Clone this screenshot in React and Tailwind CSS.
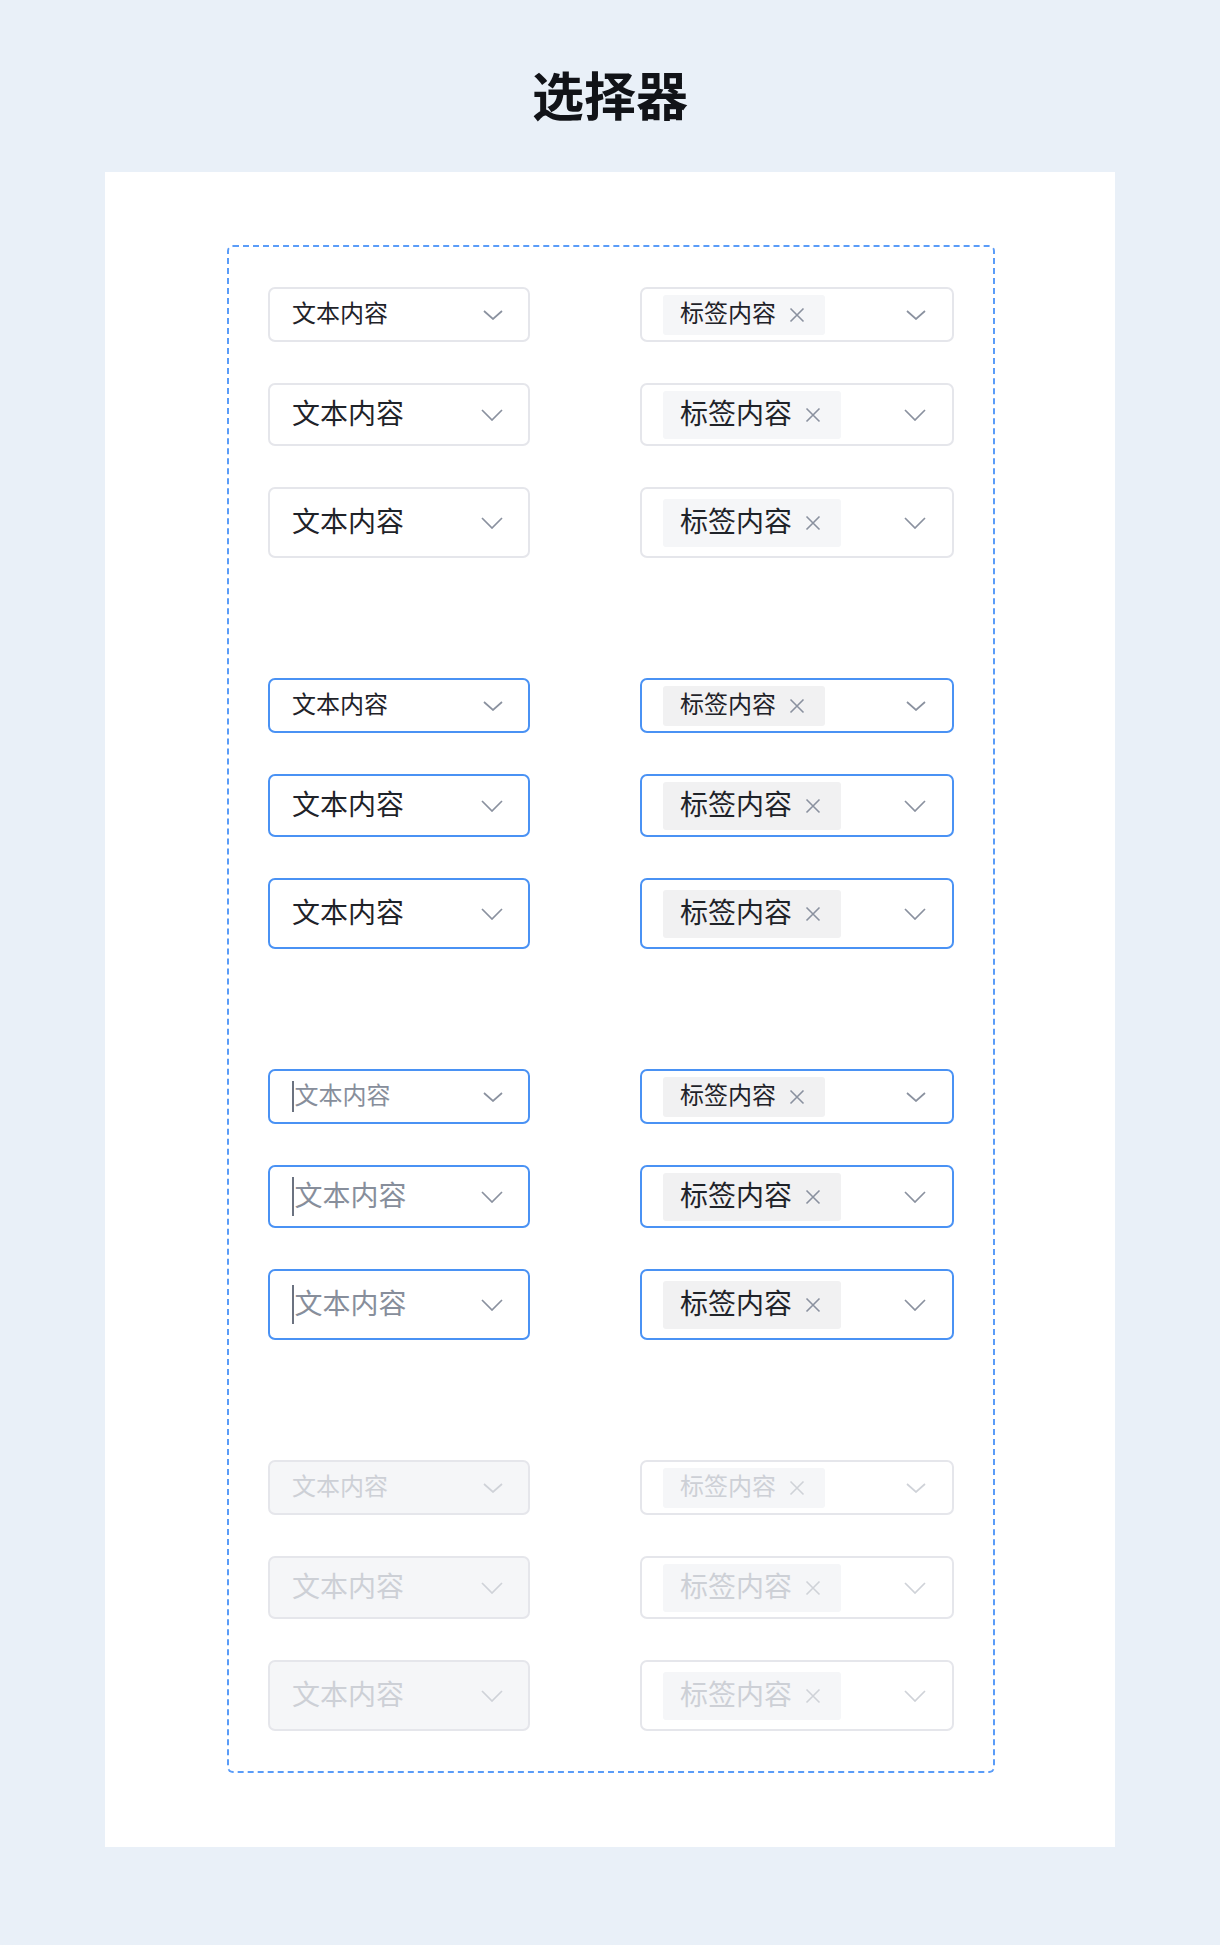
import React from 'react';

const font = { fontFamily: '"Noto Sans CJK SC", "Noto Sans", sans-serif' };

const sizes = {
  sm: { h: 'h-[55px]', text: 'text-[24px]', tag: 'h-[40px]', caret: 'h-[31px]', chevW: 20, chevH: 10 },
  md: { h: 'h-[63px]', text: 'text-[28px]', tag: 'h-[48px]', caret: 'h-[39px]', chevW: 22, chevH: 12 },
  lg: { h: 'h-[71px]', text: 'text-[28px]', tag: 'h-[48px]', caret: 'h-[39px]', chevW: 22, chevH: 12 },
};

const Chevron = ({ w, h, color }) => (
  <svg width={w} height={h} viewBox={`0 0 ${w} ${h}`} fill="none">
    <path d={`M1 1 L${w / 2} ${h - 1} L${w - 1} 1`} stroke={color} strokeWidth="1.7" />
  </svg>
);

const Cross = ({ color }) => (
  <svg width="16" height="16" viewBox="0 0 16 16" fill="none">
    <path d="M1.5 1.5 L14.5 14.5 M14.5 1.5 L1.5 14.5" stroke={color} strokeWidth="1.6" />
  </svg>
);

const boxClass = (state) => {
  if (state === 'active' || state === 'focus') return 'border-[#4a92f4] bg-white';
  if (state === 'disabled') return 'border-[#e5e6eb] bg-[#f5f6f8]';
  return 'border-[#e5e6eb] bg-white';
};

const TextSelect = ({ size, state }) => {
  const s = sizes[size];
  const disabled = state === 'disabled';
  const textColor = disabled ? 'text-[#cdd0d6]' : state === 'focus' ? 'text-[#878e9b]' : 'text-[#1f2329]';
  return (
    <div className={`w-[262px] ${s.h} border-2 rounded-[7px] flex items-center justify-between pl-[22px] pr-[25px] ${boxClass(state)}`}>
      <div className="flex items-center">
        {state === 'focus' && <span className={`w-[1.5px] ${s.caret} bg-[#6b7280] mr-[1px]`}></span>}
        <span className={`${s.text} leading-none pb-[5px] ${textColor}`}>文本内容</span>
      </div>
      <Chevron w={s.chevW} h={s.chevH} color={disabled ? '#cfd2d8' : '#8a919f'} />
    </div>
  );
};

const TagSelect = ({ size, state }) => {
  const s = sizes[size];
  const disabled = state === 'disabled';
  const tagBg = state === 'active' || state === 'focus' ? 'bg-[#f1f1f2]' : 'bg-[#f5f6f8]';
  return (
    <div className={`w-[314px] ${s.h} border-2 rounded-[7px] flex items-center justify-between pl-[21px] pr-[26px] ${state === 'disabled' ? 'border-[#e5e6eb] bg-white' : boxClass(state)}`}>
      <div className={`${s.tag} ${tagBg} rounded-[3px] flex items-center pl-[17px] pr-[20px] gap-[13px]`}>
        <span className={`${s.text} leading-none pb-[5px] ${disabled ? 'text-[#cdd0d6]' : 'text-[#1f2329]'}`}>标签内容</span>
        <Cross color={disabled ? '#cfd2d8' : '#8a919f'} />
      </div>
      <Chevron w={s.chevW} h={s.chevH} color={disabled ? '#cfd2d8' : '#8a919f'} />
    </div>
  );
};

const Group = ({ state }) => (
  <div className="flex flex-col gap-[41px]">
    {['sm', 'md', 'lg'].map((size) => (
      <div key={size} className="flex items-center justify-between">
        <TextSelect size={size} state={state} />
        <TagSelect size={size} state={state} />
      </div>
    ))}
  </div>
);

export default function App() {
  return (
    <div className="min-h-[1945px] bg-[#e9f0f8] flex flex-col items-center" style={font}>
      <h1 className="pt-[63px] mb-[47px] text-[52px] leading-[62px] font-bold text-[#111318]">选择器</h1>
      <div className="w-[1010px] bg-white pt-[73px] pb-[74px] pl-[122px] pr-[120px]">
        <div className="border-2 border-dashed border-[#5a9cf8] rounded-[6px] px-[39px] py-[40px] flex flex-col gap-[120px]">
          <Group state="default" />
          <Group state="active" />
          <Group state="focus" />
          <Group state="disabled" />
        </div>
      </div>
    </div>
  );
}
